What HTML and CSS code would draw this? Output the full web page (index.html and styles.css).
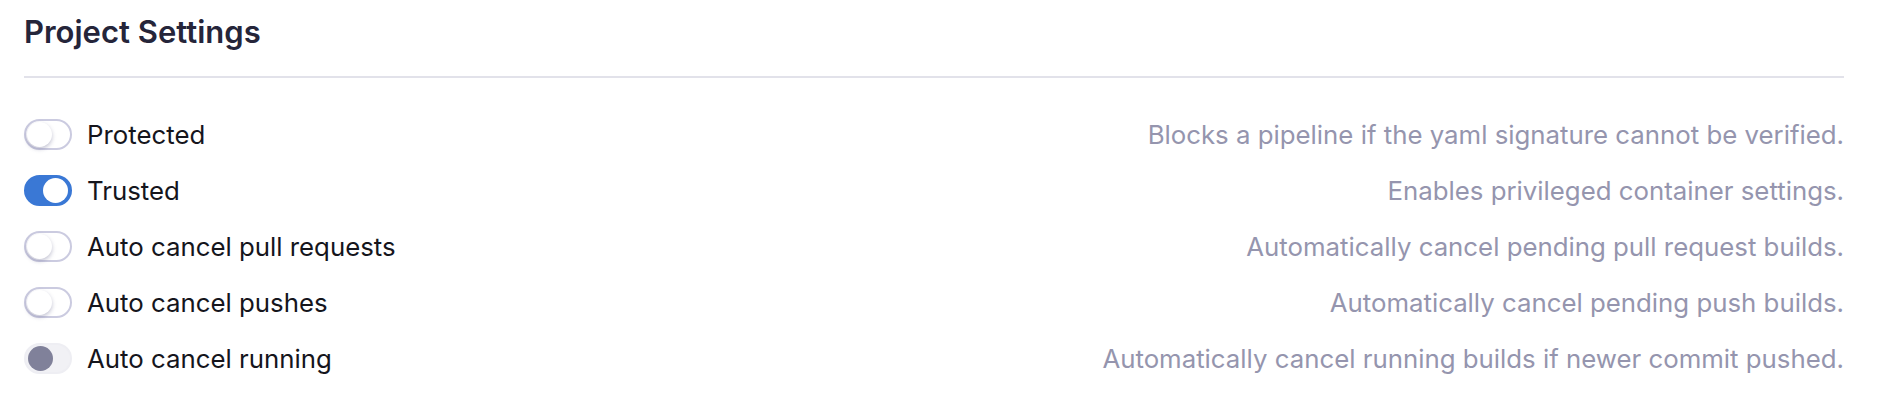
FILE: index.html
```html
<!DOCTYPE html>
<html lang="en">
<head>
<meta charset="utf-8">
<title>Project Settings</title>
<link rel="stylesheet" href="styles.css">
</head>
<body>
<div class="page">
  <h1 class="title">Project Settings</h1>
  <div class="settings">
    <div class="row">
      <span class="toggle"><span class="knob"></span></span>
      <span class="label">Protected</span>
      <span class="desc">Blocks a pipeline if the yaml signature cannot be verified.</span>
    </div>
    <div class="row">
      <span class="toggle on"><span class="knob"></span></span>
      <span class="label">Trusted</span>
      <span class="desc">Enables privileged container settings.</span>
    </div>
    <div class="row">
      <span class="toggle"><span class="knob"></span></span>
      <span class="label">Auto cancel pull requests</span>
      <span class="desc">Automatically cancel pending pull request builds.</span>
    </div>
    <div class="row">
      <span class="toggle"><span class="knob"></span></span>
      <span class="label">Auto cancel pushes</span>
      <span class="desc">Automatically cancel pending push builds.</span>
    </div>
    <div class="row">
      <span class="toggle disabled"><span class="knob"></span></span>
      <span class="label">Auto cancel running</span>
      <span class="desc">Automatically cancel running builds if newer commit pushed.</span>
    </div>
  </div>
</div>
</body>
</html>
```

FILE: styles.css
```css
* { box-sizing: border-box; }
body {
  margin: 0;
  background: #ffffff;
  font-family: Inter, "Noto Sans", sans-serif;
}
.page {
  padding: 14px 44px 0 24px;
}
.title {
  margin: 0;
  font-size: 31px;
  line-height: 36px;
  font-weight: 600;
  color: #25253a;
  padding-bottom: 26px;
  border-bottom: 2px solid #e2e2ea;
}
.settings {
  padding-top: 28px;
  display: flex;
  flex-direction: column;
}
.row {
  display: flex;
  align-items: center;
  height: 56px;
}
.toggle {
  position: relative;
  flex: none;
  width: 48px;
  height: 31px;
  border-radius: 16px;
  border: 2px solid #cbcbe0;
  background: #ffffff;
}
.toggle .knob {
  position: absolute;
  top: 1px;
  left: 1px;
  width: 25px;
  height: 25px;
  border-radius: 50%;
  background: #ffffff;
  box-shadow: 0 2px 4px rgba(100, 100, 140, 0.4);
}
.toggle.on {
  background: #3a78d5;
  border-color: #3a78d5;
}
.toggle.on .knob {
  left: auto;
  right: 2px;
  box-shadow: none;
}
.toggle.disabled {
  background: #f1f1f5;
  border-color: #eeeef3;
}
.toggle.disabled .knob {
  left: 2px;
  background: #80819a;
  box-shadow: none;
}
.label {
  margin-left: 15px;
  font-size: 25.8px;
  color: #15151c;
}
.desc {
  margin-left: auto;
  font-size: 25.8px;
  color: #9595ae;
}
```
